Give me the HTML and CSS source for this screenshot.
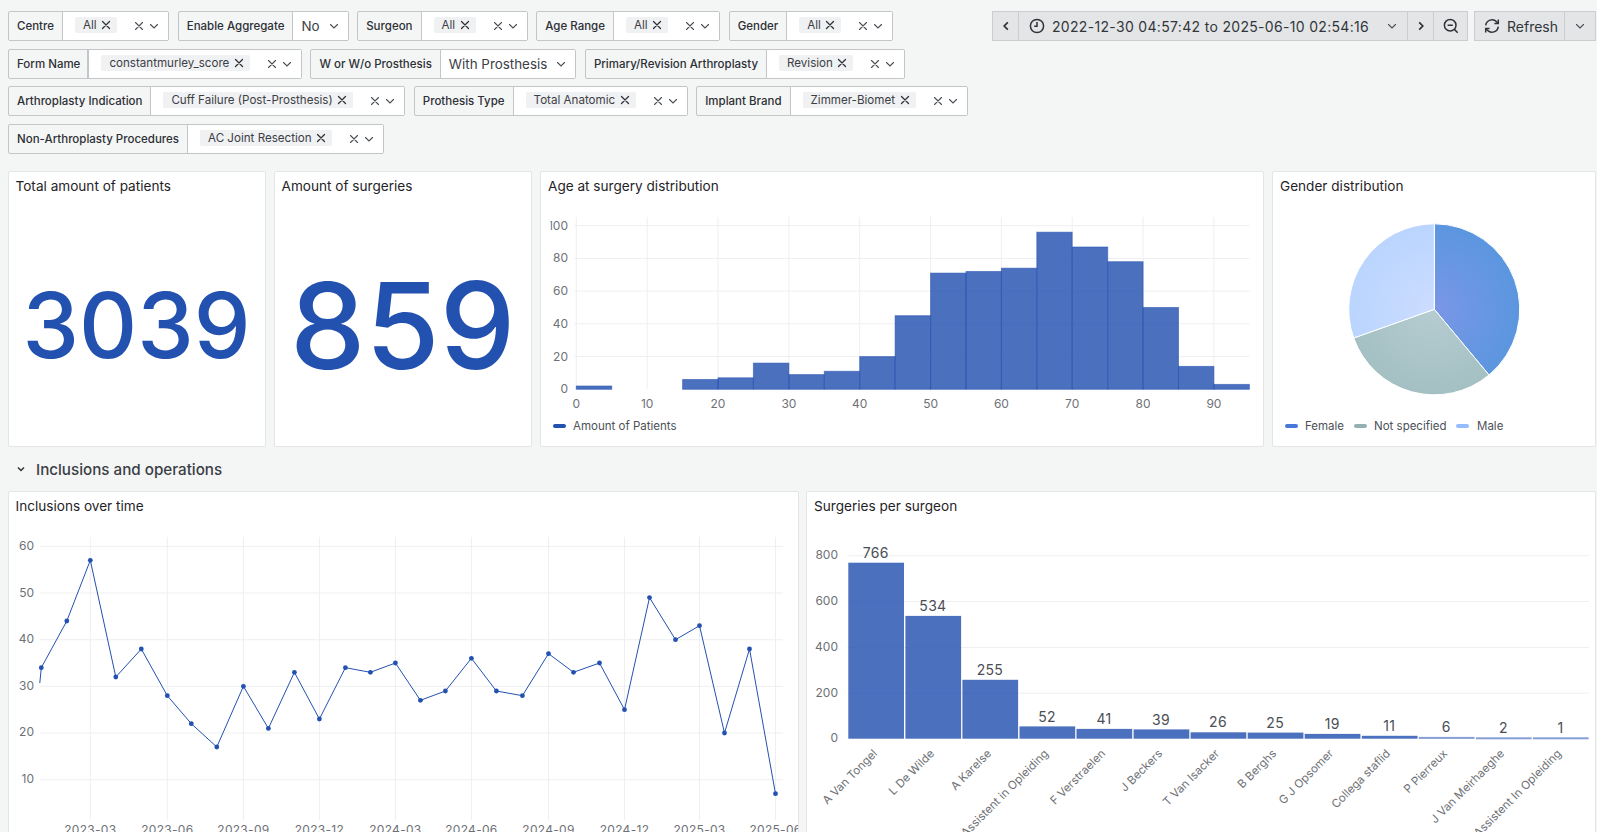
FILE: index.html
```html
<!DOCTYPE html>
<html lang="en">
<head>
<meta charset="utf-8">
<title>Dashboard</title>
<link rel="stylesheet" href="styles.css">
</head>
<body>
<svg class="defs" width="0" height="0" aria-hidden="true">
  <defs>
    <symbol id="x" viewBox="0 0 10 10"><path d="M1.5 1.5l7 7M8.5 1.5l-7 7"/></symbol>
    <symbol id="chev" viewBox="0 0 10 10"><path d="M1.5 3.5L5 7l3.5-3.5"/></symbol>
    <radialGradient id="gf" gradientUnits="userSpaceOnUse" cx="1434.3" cy="309.3" r="86"><stop offset="0" stop-color="#7a97e6"/><stop offset="1" stop-color="#5b96df"/></radialGradient>
    <radialGradient id="gn" gradientUnits="userSpaceOnUse" cx="1434.3" cy="309.3" r="86"><stop offset="0" stop-color="#b5ccd0"/><stop offset="1" stop-color="#a4c0c3"/></radialGradient>
    <radialGradient id="gm" gradientUnits="userSpaceOnUse" cx="1434.3" cy="309.3" r="86"><stop offset="0" stop-color="#ccdcff"/><stop offset="1" stop-color="#bad5fe"/></radialGradient>
    <clipPath id="clip100"><rect x="550.5" y="204" width="40" height="40"/></clipPath>
  </defs>
</svg>

<header class="toolbar">
  <div class="filters">
    <div class="filter"><span class="label">Centre</span><div class="value"><span class="chip">All<svg class="ico-x"><use href="#x"/></svg></span><svg class="ico-clear"><use href="#x"/></svg><svg class="ico-chev"><use href="#chev"/></svg></div></div>
    <div class="filter"><span class="label">Enable Aggregate</span><div class="value plain">No<svg class="ico-chev"><use href="#chev"/></svg></div></div>
    <div class="filter"><span class="label">Surgeon</span><div class="value"><span class="chip">All<svg class="ico-x"><use href="#x"/></svg></span><svg class="ico-clear"><use href="#x"/></svg><svg class="ico-chev"><use href="#chev"/></svg></div></div>
    <div class="filter"><span class="label">Age Range</span><div class="value"><span class="chip">All<svg class="ico-x"><use href="#x"/></svg></span><svg class="ico-clear"><use href="#x"/></svg><svg class="ico-chev"><use href="#chev"/></svg></div></div>
    <div class="filter"><span class="label">Gender</span><div class="value"><span class="chip">All<svg class="ico-x"><use href="#x"/></svg></span><svg class="ico-clear"><use href="#x"/></svg><svg class="ico-chev"><use href="#chev"/></svg></div></div>
    <div class="filter"><span class="label double">Form Name</span><div class="value"><span class="chip">constantmurley_score<svg class="ico-x"><use href="#x"/></svg></span><svg class="ico-clear"><use href="#x"/></svg><svg class="ico-chev"><use href="#chev"/></svg></div></div>
    <div class="filter"><span class="label">W or W/o Prosthesis</span><div class="value plain">With Prosthesis<svg class="ico-chev"><use href="#chev"/></svg></div></div>
    <div class="filter"><span class="label">Primary/Revision Arthroplasty</span><div class="value"><span class="chip">Revision<svg class="ico-x"><use href="#x"/></svg></span><svg class="ico-clear"><use href="#x"/></svg><svg class="ico-chev"><use href="#chev"/></svg></div></div>
    <div class="filter"><span class="label">Arthroplasty Indication</span><div class="value"><span class="chip">Cuff Failure (Post-Prosthesis)<svg class="ico-x"><use href="#x"/></svg></span><svg class="ico-clear"><use href="#x"/></svg><svg class="ico-chev"><use href="#chev"/></svg></div></div>
    <div class="filter"><span class="label">Prothesis Type</span><div class="value"><span class="chip">Total Anatomic<svg class="ico-x"><use href="#x"/></svg></span><svg class="ico-clear"><use href="#x"/></svg><svg class="ico-chev"><use href="#chev"/></svg></div></div>
    <div class="filter"><span class="label">Implant Brand</span><div class="value"><span class="chip">Zimmer-Biomet<svg class="ico-x"><use href="#x"/></svg></span><svg class="ico-clear"><use href="#x"/></svg><svg class="ico-chev"><use href="#chev"/></svg></div></div>
    <div class="filter"><span class="label">Non-Arthroplasty Procedures</span><div class="value"><span class="chip">AC Joint Resection<svg class="ico-x"><use href="#x"/></svg></span><svg class="ico-clear"><use href="#x"/></svg><svg class="ico-chev"><use href="#chev"/></svg></div></div>
  </div>
  <div class="timebar">
    <div class="btn-group">
      <button class="tbtn narrow"><svg class="ico-nav" viewBox="0 0 10 10"><path d="M6.5 2L3.5 5l3 3"/></svg></button>
      <button class="tbtn range">
        <svg class="ico-clock" viewBox="0 0 16 16"><circle cx="8" cy="8" r="6.6"/><path d="M8 4v4.2H5.2"/></svg>
        <span>2022-12-30 04:57:42 to 2025-06-10 02:54:16</span>
        <svg class="ico-chev"><use href="#chev"/></svg>
      </button>
      <button class="tbtn narrow"><svg class="ico-nav" viewBox="0 0 10 10"><path d="M3.5 2l3 3-3 3"/></svg></button>
      <button class="tbtn zoom"><svg class="ico-zoom" viewBox="0 0 16 16"><circle cx="7.2" cy="7.2" r="5.8"/><path d="M4.6 7.2h5.2M11.4 11.4l3.3 3.3"/></svg></button>
    </div>
    <div class="btn-group">
      <button class="tbtn refresh"><svg class="ico-sync" viewBox="0 0 16 16"><path d="M1.7 7.4A6.4 6.4 0 0 1 12.6 3.7L14.3 5.4M14.3 8.6A6.4 6.4 0 0 1 3.4 12.3L1.7 10.6"/><path d="M14.3 1.5v3.9h-3.9M1.7 14.5v-3.9h3.9"/></svg><span>Refresh</span></button>
      <button class="tbtn caret"><svg class="ico-chev"><use href="#chev"/></svg></button>
    </div>
  </div>
</header>

<section class="row-top">
  <article class="panel">
    <h2 class="panel-title">Total amount of patients</h2>
    <div class="stat stat-md">3039</div>
  </article>
  <article class="panel">
    <h2 class="panel-title">Amount of surgeries</h2>
    <div class="stat stat-lg">859</div>
  </article>
  <article class="panel">
    <h2 class="panel-title">Age at surgery distribution</h2>
    <svg class="chart" width="722" height="242" viewBox="541 204 722 242">
      <g class="grid">
        <path d="M574.4 225.7H1249.5M574.4 258.4H1249.5M574.4 291.1H1249.5M574.4 323.8H1249.5M574.4 356.6H1249.5"/>
        <path d="M576.3 217V389.3M647.2 217V389.3M718 217V389.3M788.9 217V389.3M859.7 217V389.3M930.6 217V389.3M1001.4 217V389.3M1072.2 217V389.3M1143.1 217V389.3M1213.9 217V389.3"/>
      </g>
      <g class="bars">
        <rect x="576.3" y="386" width="35.4" height="3.3"/>
        <rect x="682.6" y="379.5" width="35.4" height="9.8"/>
        <rect x="718" y="377.8" width="35.4" height="11.5"/>
        <rect x="753.4" y="363.1" width="35.5" height="26.2"/>
        <rect x="788.9" y="374.6" width="35.4" height="14.7"/>
        <rect x="824.3" y="371.3" width="35.4" height="18"/>
        <rect x="859.7" y="356.6" width="35.4" height="32.7"/>
        <rect x="895.1" y="315.7" width="35.5" height="73.6"/>
        <rect x="930.6" y="273.1" width="35.4" height="116.2"/>
        <rect x="966" y="271.5" width="35.4" height="117.8"/>
        <rect x="1001.4" y="268.2" width="35.4" height="121.1"/>
        <rect x="1036.8" y="232.2" width="35.4" height="157.1"/>
        <rect x="1072.2" y="247" width="35.5" height="142.3"/>
        <rect x="1107.7" y="261.7" width="35.4" height="127.6"/>
        <rect x="1143.1" y="307.5" width="35.4" height="81.8"/>
        <rect x="1178.5" y="366.4" width="35.4" height="22.9"/>
        <rect x="1213.9" y="384.4" width="35.5" height="4.9"/>
      </g>
      <g class="axis end">
        <text x="568" y="229.7" clip-path="url(#clip100)">100</text>
        <text x="568" y="262.4">80</text>
        <text x="568" y="295.1">60</text>
        <text x="568" y="327.8">40</text>
        <text x="568" y="360.6">20</text>
        <text x="568" y="393.3">0</text>
      </g>
      <g class="axis mid">
        <text x="576.3" y="408">0</text><text x="647.2" y="408">10</text><text x="718" y="408">20</text><text x="788.9" y="408">30</text><text x="859.7" y="408">40</text><text x="930.6" y="408">50</text><text x="1001.4" y="408">60</text><text x="1072.2" y="408">70</text><text x="1143.1" y="408">80</text><text x="1213.9" y="408">90</text>
      </g>
      <rect class="swatch sw-blue" x="553" y="424" width="13" height="4" rx="2"/>
      <text class="legend" x="573" y="430.2">Amount of Patients</text>
    </svg>
  </article>
  <article class="panel">
    <h2 class="panel-title">Gender distribution</h2>
    <svg class="chart" width="322" height="242" viewBox="1273 204 322 242">
      <g class="pie">
        <path fill="url(#gf)" d="M1434.3 309.3V223.8A85.5 85.5 0 0 1 1489 375Z"/>
        <path fill="url(#gn)" d="M1434.3 309.3L1489 375A85.5 85.5 0 0 1 1353.7 338Z"/>
        <path fill="url(#gm)" d="M1434.3 309.3L1353.7 338A85.5 85.5 0 0 1 1434.3 223.8Z"/>
      </g>
      <rect class="swatch sw-f" x="1285" y="424" width="13" height="4" rx="2"/>
      <text class="legend" x="1305" y="430.2">Female</text>
      <rect class="swatch sw-n" x="1354" y="424" width="13" height="4" rx="2"/>
      <text class="legend" x="1374" y="430.2">Not specified</text>
      <rect class="swatch sw-m" x="1456" y="424" width="13" height="4" rx="2"/>
      <text class="legend" x="1477" y="430.2">Male</text>
    </svg>
  </article>
</section>

<div class="section-head">
  <svg class="ico-section" viewBox="0 0 10 10"><path d="M2 3.5L5 6.5l3-3"/></svg>
  <h1>Inclusions and operations</h1>
</div>

<section class="row-bottom">
  <article class="panel">
    <h2 class="panel-title">Inclusions over time</h2>
    <svg class="chart" width="789" height="308" viewBox="9 524 789 308">
      <g class="grid">
        <path d="M39.8 546.3H783M39.8 593H783M39.8 639.7H783M39.8 686.3H783M39.8 733H783M39.8 779.7H783"/>
        <path d="M90.3 537V820M167.3 537V820M243.4 537V820M319.4 537V820M395.4 537V820M471.4 537V820M548.5 537V820M624.5 537V820M699.5 537V820M775.5 537V820"/>
      </g>
      <path class="line" d="M39.8 683L41.3 667.7 66.8 621 90.3 560.3 115.8 677 141.3 649 167.3 695.7 191.3 723.7 216.8 747 243.4 686.3 268.4 728.4 294.4 672.3 319.4 719 345.4 667.7 370.4 672.3 395.4 663 420.4 700.3 445.4 691 471.4 658.3 496.4 691 522.4 695.7 548.5 653.7 573.5 672.3 599.5 663 624.5 709.7 649.5 597.6 675.5 639.7 699.5 625.7 724.5 733 749.5 649 775.5 793.7"/>
      <g class="dots">
        <circle cx="41.3" cy="667.7" r="2.4"/><circle cx="66.8" cy="621" r="2.4"/><circle cx="90.3" cy="560.3" r="2.4"/><circle cx="115.8" cy="677" r="2.4"/><circle cx="141.3" cy="649" r="2.4"/><circle cx="167.3" cy="695.7" r="2.4"/><circle cx="191.3" cy="723.7" r="2.4"/><circle cx="216.8" cy="747" r="2.4"/><circle cx="243.4" cy="686.3" r="2.4"/><circle cx="268.4" cy="728.4" r="2.4"/><circle cx="294.4" cy="672.3" r="2.4"/><circle cx="319.4" cy="719" r="2.4"/><circle cx="345.4" cy="667.7" r="2.4"/><circle cx="370.4" cy="672.3" r="2.4"/><circle cx="395.4" cy="663" r="2.4"/><circle cx="420.4" cy="700.3" r="2.4"/><circle cx="445.4" cy="691" r="2.4"/><circle cx="471.4" cy="658.3" r="2.4"/><circle cx="496.4" cy="691" r="2.4"/><circle cx="522.4" cy="695.7" r="2.4"/><circle cx="548.5" cy="653.7" r="2.4"/><circle cx="573.5" cy="672.3" r="2.4"/><circle cx="599.5" cy="663" r="2.4"/><circle cx="624.5" cy="709.7" r="2.4"/><circle cx="649.5" cy="597.6" r="2.4"/><circle cx="675.5" cy="639.7" r="2.4"/><circle cx="699.5" cy="625.7" r="2.4"/><circle cx="724.5" cy="733" r="2.4"/><circle cx="749.5" cy="649" r="2.4"/><circle cx="775.5" cy="793.7" r="2.4"/>
      </g>
      <g class="axis end">
        <text x="34" y="549.8">60</text><text x="34" y="596.5">50</text><text x="34" y="643">40</text><text x="34" y="689.5">30</text><text x="34" y="736.3">20</text><text x="34" y="783">10</text>
      </g>
      <g class="axis mid dates">
        <text x="90.3" y="833.5">2023-03</text><text x="167.3" y="833.5">2023-06</text><text x="243.4" y="833.5">2023-09</text><text x="319.4" y="833.5">2023-12</text><text x="395.4" y="833.5">2024-03</text><text x="471.4" y="833.5">2024-06</text><text x="548.5" y="833.5">2024-09</text><text x="624.5" y="833.5">2024-12</text><text x="699.5" y="833.5">2025-03</text><text x="775.5" y="833.5">2025-06</text>
      </g>
    </svg>
  </article>
  <article class="panel">
    <h2 class="panel-title">Surgeries per surgeon</h2>
    <svg class="chart" width="788" height="308" viewBox="807 524.7 788 308">
      <g class="grid">
        <path d="M847.3 556.4H1589M847.3 602.2H1589M847.3 648.1H1589M847.3 693.9H1589"/>
      </g>
      <g class="bars solid">
        <rect x="848.3" y="563.4" width="55.7" height="176"/>
        <rect x="905.4" y="616.6" width="55.7" height="122.8"/>
        <rect x="962.4" y="680.5" width="55.7" height="58.9"/>
        <rect x="1019.5" y="727.1" width="55.7" height="12.3"/>
        <rect x="1076.5" y="729.6" width="55.7" height="9.8"/>
        <rect x="1133.6" y="730.1" width="55.7" height="9.3"/>
        <rect x="1190.6" y="733" width="55.7" height="6.4"/>
        <rect x="1247.7" y="733.3" width="55.7" height="6.1"/>
        <rect x="1304.7" y="734.6" width="55.7" height="4.8"/>
        <rect x="1361.8" y="736.5" width="55.7" height="2.9"/>
        <rect class="faint" x="1418.8" y="737.6" width="55.7" height="2"/>
        <rect class="faint" x="1475.9" y="738" width="55.7" height="2"/>
        <rect class="faint" x="1532.9" y="738" width="55.7" height="2"/>
      </g>
      <g class="vals">
        <text x="875.8" y="558.6">766</text><text x="932.9" y="611.8">534</text><text x="989.9" y="675.7">255</text><text x="1047" y="722.3">52</text><text x="1104" y="724.8">41</text><text x="1161" y="725.3">39</text><text x="1218" y="728.2">26</text><text x="1275.2" y="728.5">25</text><text x="1332.2" y="729.8">19</text><text x="1389.3" y="731.7">11</text><text x="1446.3" y="732.8">6</text><text x="1503.4" y="733.7">2</text><text x="1560.4" y="734">1</text>
      </g>
      <g class="axis end">
        <text x="838" y="559.5">800</text><text x="838" y="605.5">600</text><text x="838" y="651.5">400</text><text x="838" y="697.3">200</text><text x="838" y="743">0</text>
      </g>
      <g class="axis end slanted">
        <text x="878" y="755" transform="rotate(-45 878 755)">A Van Tongel</text>
        <text x="935" y="755" transform="rotate(-45 935 755)">L De Wilde</text>
        <text x="992" y="755" transform="rotate(-45 992 755)">A Karelse</text>
        <text x="1049" y="755" transform="rotate(-45 1049 755)">Assistent in Opleiding</text>
        <text x="1106" y="755" transform="rotate(-45 1106 755)">F Verstraelen</text>
        <text x="1163" y="755" transform="rotate(-45 1163 755)">J Beckers</text>
        <text x="1220" y="755" transform="rotate(-45 1220 755)">T Van Isacker</text>
        <text x="1277" y="755" transform="rotate(-45 1277 755)">B Berghs</text>
        <text x="1334" y="755" transform="rotate(-45 1334 755)">G J Opsomer</text>
        <text x="1391" y="755" transform="rotate(-45 1391 755)">Collega staflid</text>
        <text x="1448" y="755" transform="rotate(-45 1448 755)">P Pierreux</text>
        <text x="1505" y="755" transform="rotate(-45 1505 755)">J Van Meirhaeghe</text>
        <text x="1562" y="755" transform="rotate(-45 1562 755)">Assistent In Opleiding</text>
      </g>
    </svg>
  </article>
</section>
</body>
</html>
```

FILE: styles.css
```css
* { box-sizing: border-box; }
html, body { height: 832px; overflow: hidden; }
body {
  margin: 0;
  background: #f4f5f5;
  color: #2c3035;
  font-family: Inter, "Liberation Sans", sans-serif;
  font-size: 11.6px;
}
.defs { position: absolute; }

.toolbar { display: flex; justify-content: space-between; padding: 11px 1px 0 8px; height: 171px; }
.filters { display: flex; flex-wrap: wrap; align-content: flex-start; gap: 7.6px 8.6px; width: 975px; }
.filter { display: flex; height: 30px; border: 1px solid #c3c5c8; border-radius: 2px; }
.label {
  display: flex; align-items: center; padding: 0 8px;
  font-size: 11.5px; font-weight: 500; border-right: 1px solid #c3c5c8; white-space: nowrap;
}
.label.double { border-right-width: 2px; padding-right: 7px; }
.value { display: flex; align-items: center; background: #fff; padding: 0 9px 0 12px; white-space: nowrap; }
.value.plain { font-size: 13.4px; padding-left: 8px; color: #3c4046; }
.value.plain .ico-chev { margin-left: 9px; }
.chip {
  display: flex; align-items: center; height: 16px; margin-top: -2px;
  padding: 0 6px 0 8px; background: #f0f1f2; border-radius: 2px; color: #3c4046;
}
.ico-x, .ico-clear, .ico-chev { fill: none; stroke: #4a4e55; stroke-linecap: round; }
.ico-x { width: 10px; height: 10px; margin-left: 4.5px; stroke-width: 1.3; stroke: #2f3338; }
.ico-clear { width: 10px; height: 10px; margin-left: 17px; stroke-width: 1.1; }
.ico-chev { width: 10px; height: 10px; margin-left: 5px; stroke-width: 1.1; }

.timebar { display: flex; gap: 7px; }
.btn-group { display: flex; height: 30px; }
.tbtn {
  display: flex; align-items: center; justify-content: center; height: 30px; padding: 0;
  background: #e4e5e7; border: 1px solid #cbcdd0; margin-left: -1px;
  font: 400 14px Inter, "Liberation Sans", sans-serif; color: #32363b;
}
.tbtn.narrow { width: 27px; }
.tbtn.range { width: 390px; justify-content: flex-start; padding-left: 10px; letter-spacing: .32px; }
.tbtn.range span { margin-left: 7px; }
.tbtn.range .ico-chev { margin-left: 18px; }
.tbtn.zoom { width: 35px; }
.tbtn.refresh { width: 91px; justify-content: flex-start; padding-left: 9px; }
.tbtn.refresh span { margin-left: 7px; }
.tbtn.caret { width: 32px; }
.tbtn.caret .ico-chev { margin-left: 0; }
.ico-nav { width: 12px; height: 12px; fill: none; stroke: #2f3338; stroke-width: 1.4; }
.ico-clock, .ico-zoom, .ico-sync { width: 16px; height: 16px; fill: none; stroke: #2f3338; stroke-width: 1.5; }

.row-top { display: grid; grid-template-columns: 258px 258.5px 724px 324px; gap: 8px; padding-left: 7.5px; height: 276px; }
.row-bottom { display: grid; grid-template-columns: 791.5px 790px; gap: 7px; padding-left: 7.5px; height: 360px; }
.panel { background: #fff; border: 1px solid #e4e5e6; border-radius: 2px; overflow: hidden; }
.panel-title { margin: 0; height: 32px; padding: 0 7px 3.5px; display: flex; align-items: center; font-size: 13.6px; font-weight: 400; color: #1f2328; }
.chart { display: block; }

.stat { height: 242px; display: flex; align-items: center; justify-content: center; color: #2351b0; }
.stat-md { font-size: 90.2px; font-weight: 500; }
.stat-lg { font-size: 120px; font-weight: 500; }

.section-head { display: flex; align-items: center; height: 44px; padding-left: 16px; }
.section-head h1 { margin: 0 0 0 10px; font-size: 15.2px; font-weight: 500; color: #3a3e44; }
.ico-section { width: 10px; height: 10px; fill: none; stroke: #2f3338; stroke-width: 1.5; }

.grid path { fill: none; stroke: #eeeff0; stroke-width: 1; }
.bars rect { fill: #2351b0; fill-opacity: .82; stroke: #2351b0; stroke-opacity: .55; stroke-width: 1; }
.bars.solid rect { stroke: #fff; stroke-opacity: 0; }
.bars.solid rect.faint { fill-opacity: .55; }
.axis text { font-size: 12px; fill: #6e7176; }
.axis.dates text { letter-spacing: .3px; }
.axis.slanted text { font-size: 11.5px; }
.axis.end text { text-anchor: end; }
.axis.mid text { text-anchor: middle; }
.vals text { font-size: 14px; fill: #4a4e55; text-anchor: middle; letter-spacing: .3px; }
.legend { font-size: 11.5px; fill: #4c5157; }
.swatch.sw-blue { fill: #2351b0; }
.swatch.sw-f { fill: #4678d8; }
.swatch.sw-n { fill: #93b1b3; }
.swatch.sw-m { fill: #94bcfe; }
.pie path { stroke: #fff; stroke-width: 1; }
.line { fill: none; stroke: #2351b0; stroke-width: 1; }
.dots circle { fill: #2351b0; }
```
